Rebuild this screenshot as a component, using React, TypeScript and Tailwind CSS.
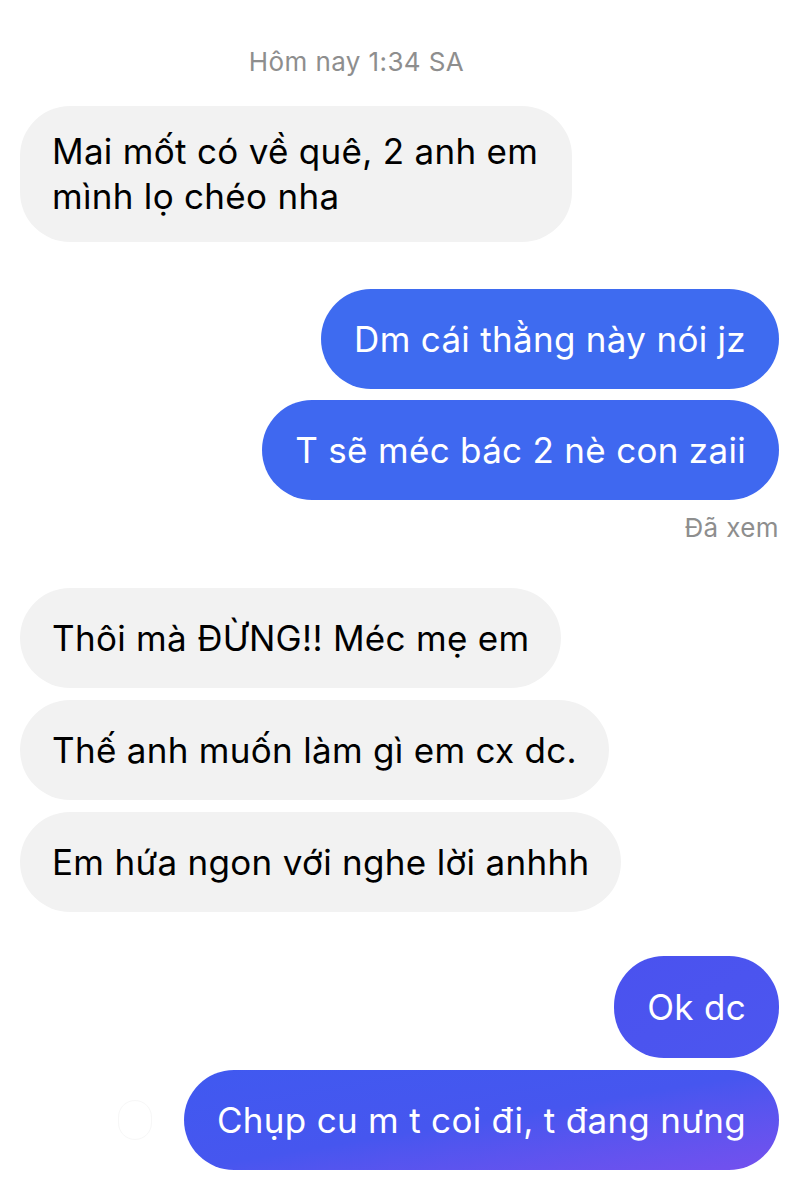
import React from "react";

const font = { fontFamily: "Inter, 'Noto Sans', 'Liberation Sans', sans-serif" };

function Received({ children, className = "" }: { children: React.ReactNode; className?: string }) {
  return (
    <div className="flex justify-start">
      <div
        className={
          "bg-[#f2f2f2] text-black text-[35px] tracking-[0.3px] px-[32px] rounded-[50px] " + className
        }
      >
        {children}
      </div>
    </div>
  );
}

function Sent({ children, className = "" }: { children: React.ReactNode; className?: string }) {
  return (
    <div className="flex justify-end">
      <div
        className={
          "text-white text-[35px] tracking-[0.3px] whitespace-nowrap px-[33px] rounded-[50px] " + className
        }
      >
        {children}
      </div>
    </div>
  );
}

export default function App() {
  return (
    <div className="w-[808px] h-[1200px] bg-white overflow-hidden" style={font}>
      <div className="flex flex-col pl-[20px] pr-[29px]">
        <div className="pt-[47px] pr-[86px] text-center text-[26px] tracking-[0.4px] leading-[30px] text-[#8e8e8e]">
          Hôm nay 1:34 SA
        </div>

        <div className="mt-[29px]">
          <Received className="py-[23px] leading-[45px] rounded-[46px] w-[552px]">
            Mai mốt có về quê, 2 anh em mình lọ chéo nha
          </Received>
        </div>

        <div className="mt-[47px] flex flex-col gap-[11px]">
          <Sent className="bg-[#3e6bf0] py-[27px] leading-[46px]">Dm cái thằng này nói jz</Sent>
          <Sent className="bg-[#3f68f0] py-[27px] leading-[46px]">T sẽ méc bác 2 nè con zaii</Sent>
        </div>

        <div className="mt-[13px] text-right text-[26px] tracking-[0.4px] leading-[30px] text-[#8e8e8e]">
          Đã xem
        </div>

        <div className="mt-[45px] flex flex-col gap-[12px]">
          <Received className="py-[27px] leading-[46px] whitespace-nowrap">Thôi mà ĐỪNG!! Méc mẹ em</Received>
          <Received className="py-[27px] leading-[46px] whitespace-nowrap">Thế anh muốn làm gì em cx dc.</Received>
          <Received className="py-[27px] leading-[46px] whitespace-nowrap">Em hứa ngon với nghe lời anhhh</Received>
        </div>

        <div className="mt-[44px] flex flex-col gap-[12px]">
          <Sent className="bg-gradient-to-br from-[#4a52ef] to-[#4c56ef] py-[28px] leading-[46px]">Ok dc</Sent>
          <div className="flex justify-end items-center">
            <div className="mr-[32px] w-[34px] h-[40px] rounded-full border border-[#f7f7f7]" />
            <div className="text-white text-[35px] tracking-[0.3px] whitespace-nowrap px-[33px] py-[27px] leading-[46px] rounded-[50px] bg-gradient-to-br from-[#4059f0] via-[#4656ef] to-[#7450ee]">
              Chụp cu m t coi đi, t đang nưng
            </div>
          </div>
        </div>
      </div>
    </div>
  );
}
